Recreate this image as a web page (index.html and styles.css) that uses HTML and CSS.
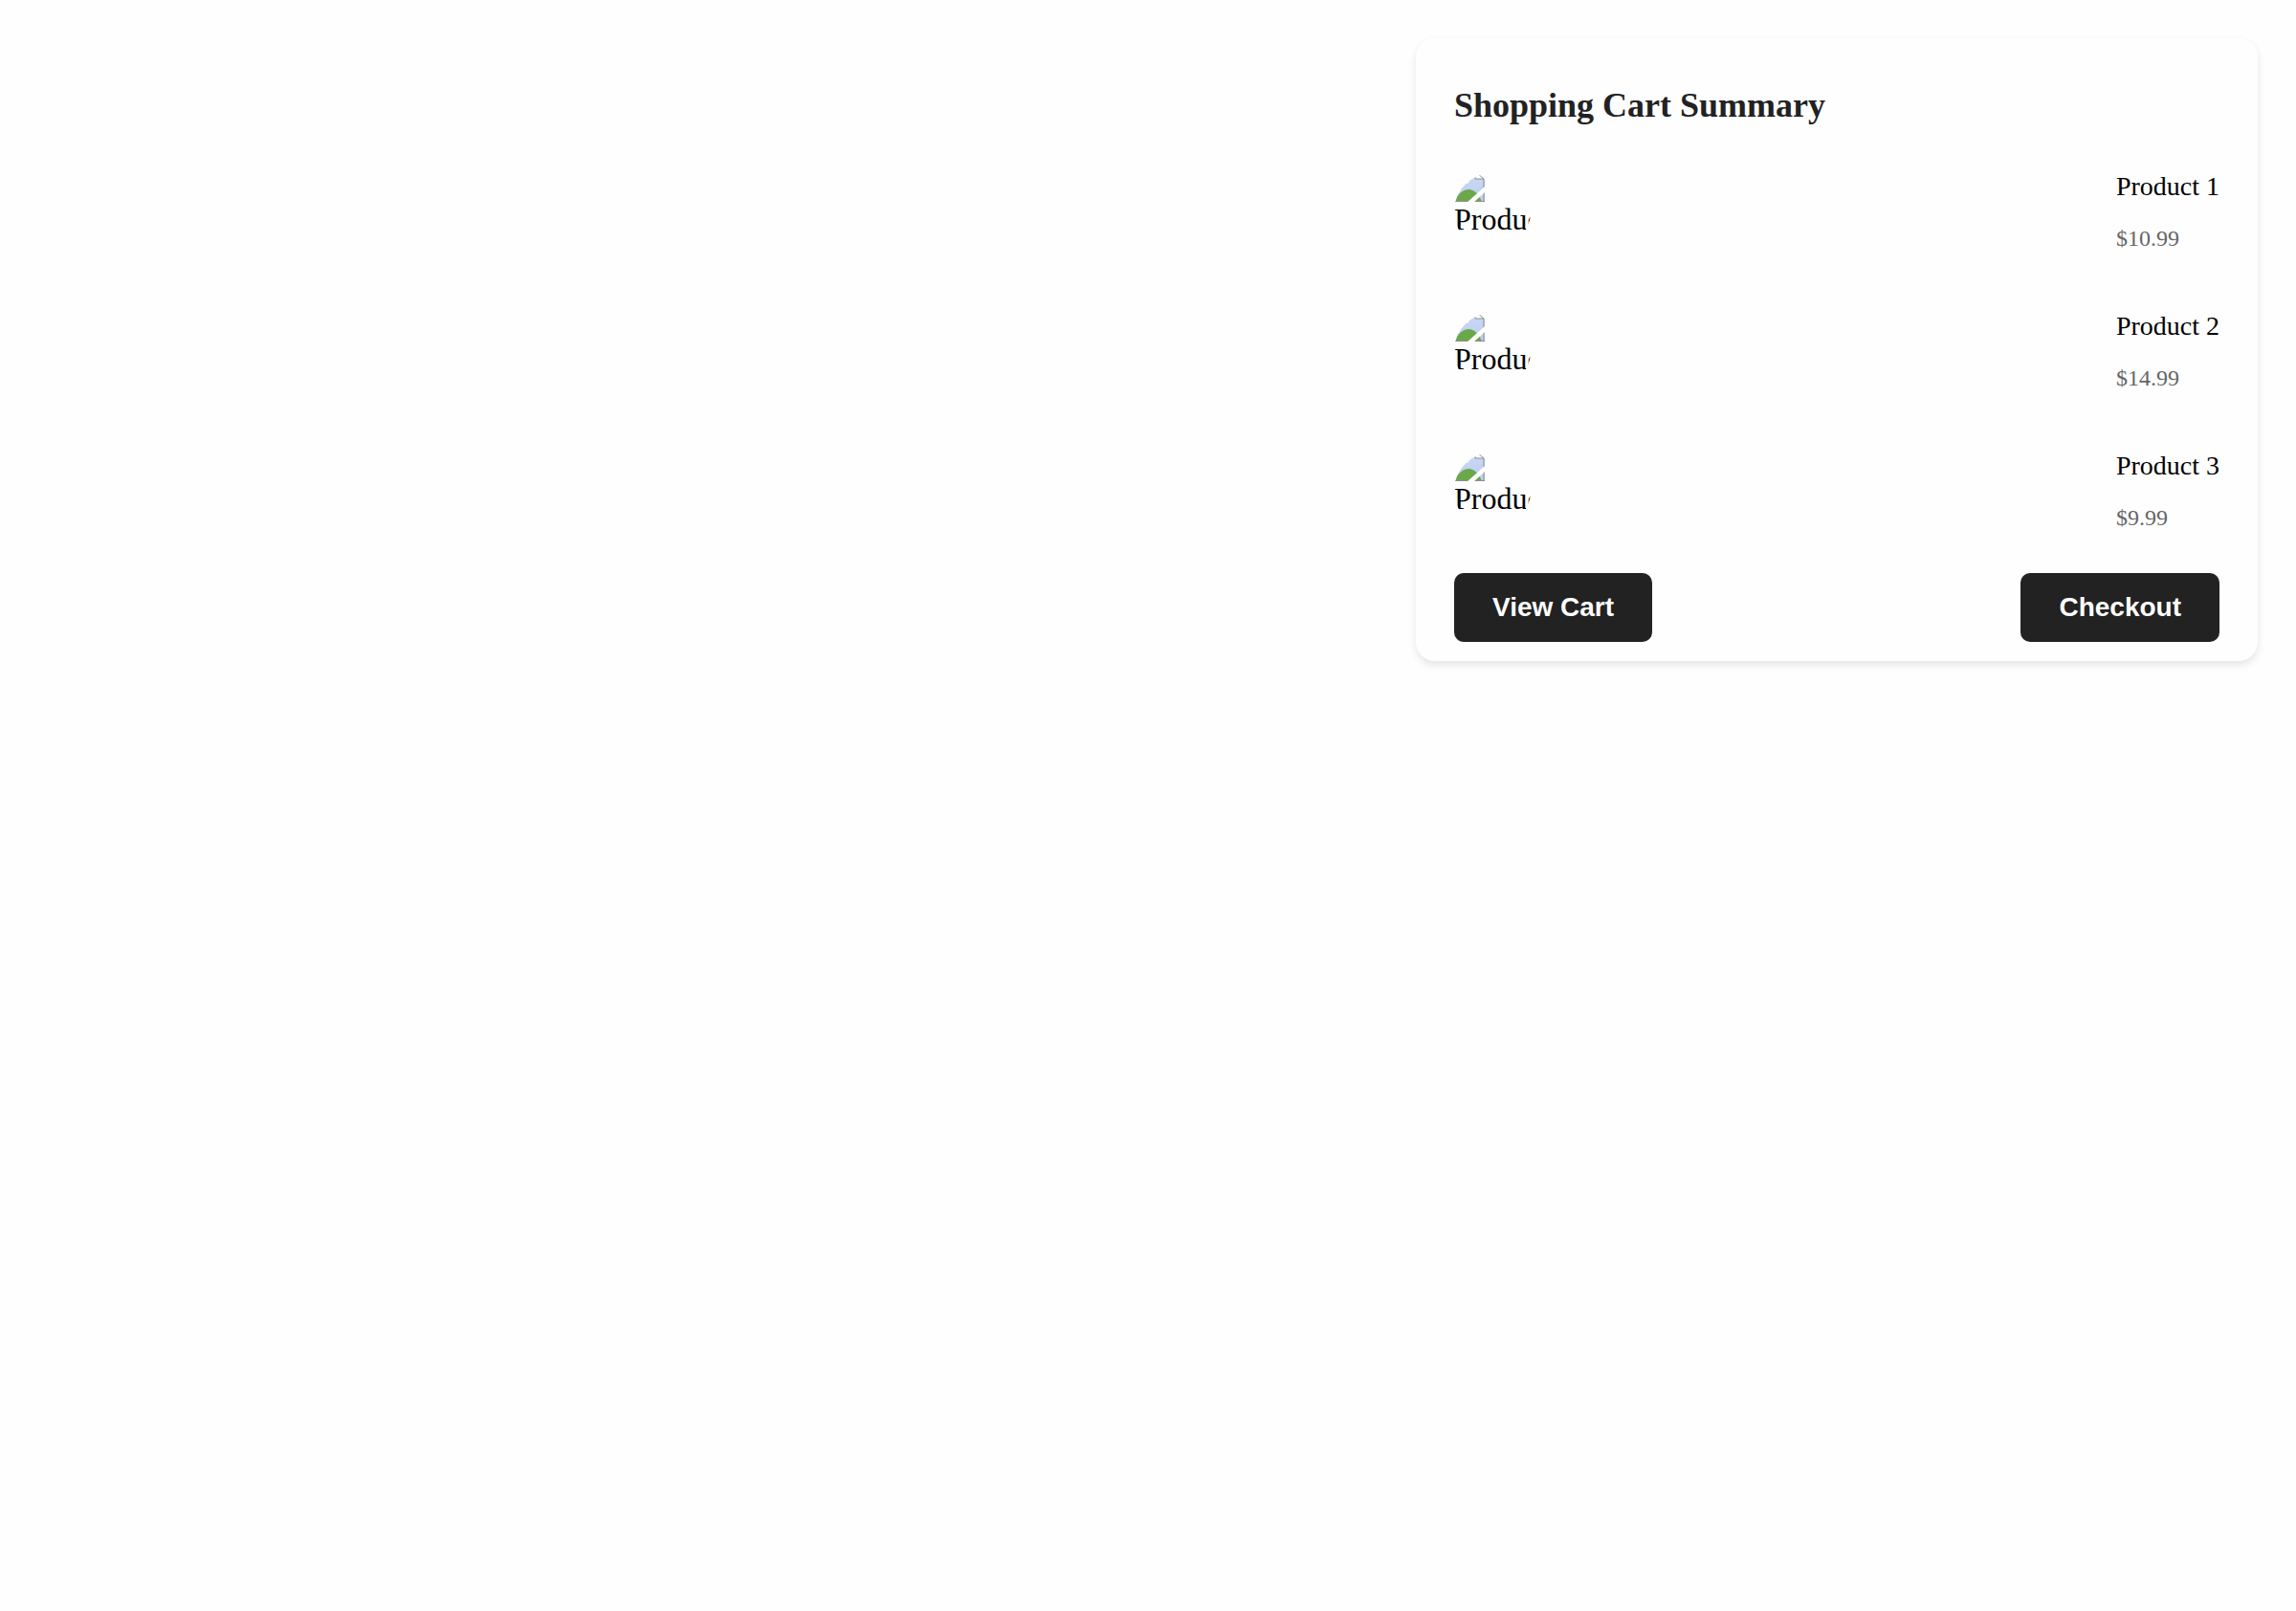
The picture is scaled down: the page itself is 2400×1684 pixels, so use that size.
FILE: index.html
```html
<!DOCTYPE html>
<html lang="en">
<head>
<meta charset="utf-8">
<title>Shopping Cart Summary</title>
<link rel="stylesheet" href="styles.css">
</head>
<body>
<svg width="0" height="0" class="defs" aria-hidden="true">
  <defs>
    <linearGradient id="sky" x1="0" y1="0" x2="0" y2="1">
      <stop offset="0" stop-color="#cbd9f5"/>
      <stop offset="1" stop-color="#bccdee"/>
    </linearGradient>
    <symbol id="missing" viewBox="0 1 32 31">
      <path d="M0 0H22L32 8V31H0Z" fill="url(#sky)"/>
      <path d="M0 12H14Q17 10 15 8Q13 7 13 5H0Z" fill="#fefefe"/>
      <path d="M0 31C4 23 9 18 15 18C21 18 26 23 29 31Z" fill="#6aa84a"/>
      <path d="M22 0V7H31L32 0Z" fill="#fefefe"/>
      <path d="M22 1V7H31M24 1L31 7V31M0 30.5H32" fill="none" stroke="#8e8e8e"/>
      <path d="M13 32L33 14V20L20 32Z" fill="#fefefe"/>
    </symbol>
  </defs>
</svg>
<section class="cart">
  <h2 class="title">Shopping Cart Summary</h2>
  <ul class="items">
    <li class="item">
      <div class="thumb"><svg class="missing"><use href="#missing"/></svg><span>Product 1</span></div>
      <div class="info"><p class="name">Product 1</p><p class="price">$10.99</p></div>
    </li>
    <li class="item">
      <div class="thumb"><svg class="missing"><use href="#missing"/></svg><span>Product 2</span></div>
      <div class="info"><p class="name">Product 2</p><p class="price">$14.99</p></div>
    </li>
    <li class="item">
      <div class="thumb"><svg class="missing"><use href="#missing"/></svg><span>Product 3</span></div>
      <div class="info"><p class="name">Product 3</p><p class="price">$9.99</p></div>
    </li>
  </ul>
  <div class="actions">
    <button class="btn" type="button">View Cart</button>
    <button class="btn" type="button">Checkout</button>
  </div>
</section>
</body>
</html>
```
FILE: styles.css
```css
* {
  box-sizing: border-box;
}

body {
  margin: 0;
  padding: 40px;
  display: flex;
  justify-content: flex-end;
  align-items: flex-start;
  background: #fefefe;
  color: #000;
  font-family: "Liberation Serif", "Times New Roman", serif;
}

.defs {
  position: absolute;
}

.cart {
  width: 100%;
  max-width: 880px;
  padding: 48px 40px 20px;
  border-radius: 20px;
  background: #fefefe;
  box-shadow: 0 4px 8px rgba(0, 0, 0, 0.1);
}

.title {
  margin: 0 0 47px;
  color: #222;
  font-size: 36px;
  line-height: 44px;
}

.items {
  display: flex;
  flex-direction: column;
  gap: 62px;
  margin: 0 0 44px;
  padding: 0;
  list-style: none;
}

.item {
  display: flex;
  justify-content: space-between;
  align-items: center;
}

.thumb {
  width: 80px;
  height: 80px;
  overflow: hidden;
  border-radius: 50%;
  font-size: 32px;
  line-height: 34px;
  white-space: nowrap;
}

.missing {
  display: block;
  width: 32px;
  height: 31px;
}

.name,
.price {
  margin: 0;
}

.name {
  margin-bottom: 24px;
  font-size: 28px;
  line-height: 32px;
}

.price {
  color: #666;
  font-size: 24px;
  line-height: 28px;
}

.actions {
  display: flex;
  justify-content: space-between;
}

.btn {
  padding: 20px 40px;
  border: 0;
  border-radius: 10px;
  background: #222;
  color: #fff;
  font: bold 28px/32px "Liberation Sans", Arial, sans-serif;
  cursor: pointer;
}
```
